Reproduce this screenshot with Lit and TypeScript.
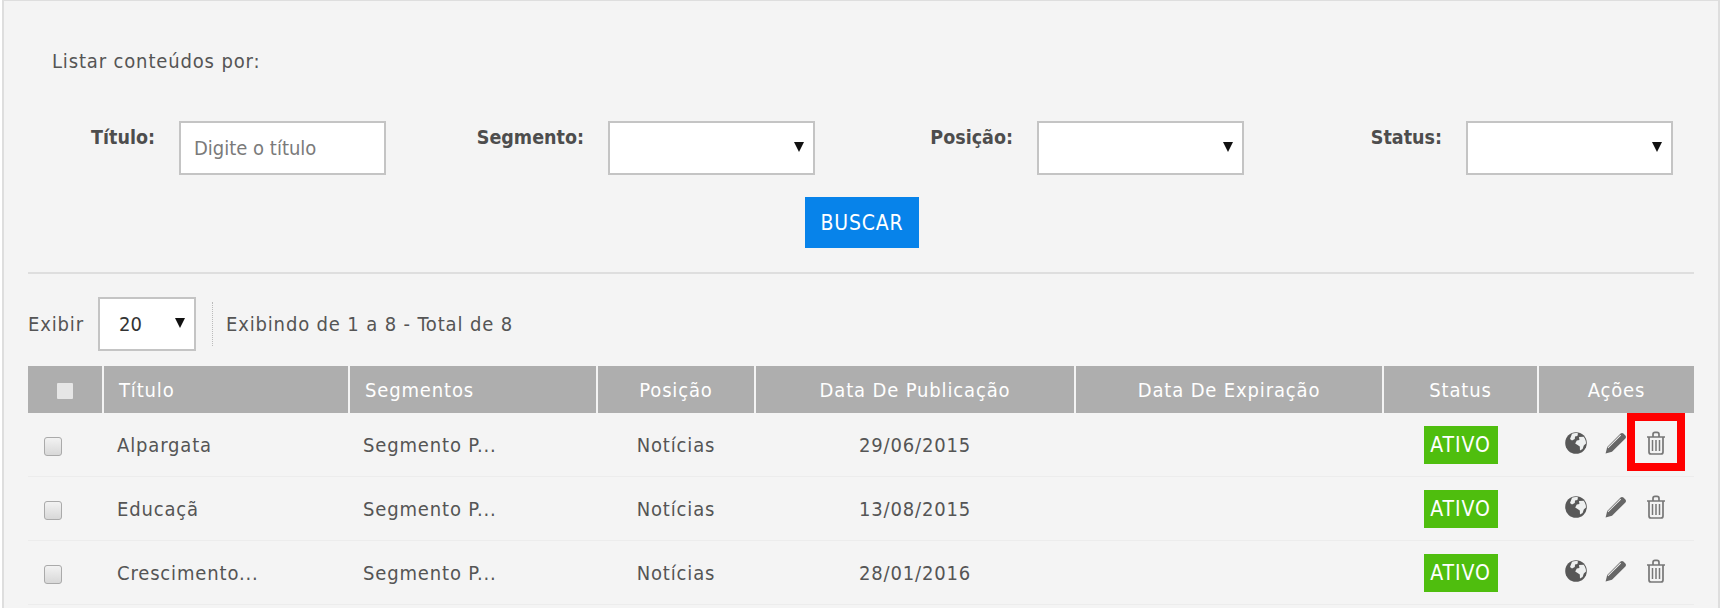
import { LitElement, html, css, svg } from "lit";
import { customElement } from "lit/decorators.js";

const rows = [
  { t: "Alpargata", d: "29/06/2015", mark: true },
  { t: "Educaçã", d: "13/08/2015", mark: false },
  { t: "Crescimento...", d: "28/01/2016", mark: false },
];

const globe = svg`<svg class="ico" viewBox="0 0 22 22"><circle cx="11" cy="11" r="10.8" fill="#585858"/><path fill="#eef0f0" d="M7 1.8 C9 1 11.6 0.9 13 1.4 L12.4 4 L10 4.6 L9.8 7 L7 8.4 L5 7 Z M14 5 L18.6 4.8 C20.2 6.8 21 9 21 11.4 L18.8 13.4 L17.6 17 L15 18.6 L14.8 14.6 L12.2 12.8 L10.2 11.4 L11.8 8.4 L14.4 8 Z"/></svg>`;
const pencil = svg`<svg class="ico" viewBox="0 0 22 22"><path fill="#666" d="M0.6 21.4 L2.2 15 L15.6 1.6 C16.4 0.8 17.6 0.8 18.4 1.6 L20.4 3.6 C21.2 4.4 21.2 5.6 20.4 6.4 L7 19.8 Z"/><path fill="#f4f4f4" d="M2.6 15.6 L15.4 2.8 L16 3.4 L3.2 16.2 Z"/></svg>`;
const trash = svg`<svg class="ico trash" viewBox="0 0 20 24" fill="none" stroke="#777" stroke-width="1.7"><path d="M1 6 H19 M7 5.6 V3.4 Q7 1.4 9 1.4 H11 Q13 1.4 13 3.4 V5.6 M3 6 V21 Q3 23 5 23 H15 Q17 23 17 21 V6"/><path stroke-width="1.5" d="M6.5 9 V20 M10 9 V20 M13.5 9 V20"/></svg>`;

@customElement("app-root")
export class AppRoot extends LitElement {
  static styles = css`
    :host {
      display: block;
      height: 608px;
      overflow: hidden;
      background: #fff;
      font-family: "DejaVu Sans", "Noto Sans", sans-serif;
      font-stretch: condensed;
      font-size: 20px;
      letter-spacing: 0.85px;
      color: #555;
    }
    .panel {
      box-sizing: border-box;
      width: 1718px;
      height: 608px;
      margin-left: 2px;
      padding: 0 24px;
      background: #f4f4f4;
      border: 2px solid #dedede;
      border-width: 1px 2px 0 2px;
    }
    .heading {
      margin: 0;
      padding: 47px 0 0 24px;
      height: 72px;
      box-sizing: border-box;
      font-size: 20px;
      line-height: 26px;
      color: #555;
      font-weight: 400;
    }
    .filters {
      display: grid;
      grid-template-columns: 358px repeat(3, 429px);
    }
    .field {
      display: flex;
      justify-content: flex-end;
      align-items: flex-start;
      margin-top: 48px;
    }
    .field label {
      font-weight: 700;
      font-size: 19.5px;
      letter-spacing: 0;
      line-height: 26px;
      padding-right: 24px;
      padding-top: 4px;
      color: #4d4d4d;
    }
    .box {
      box-sizing: border-box;
      border: 2px solid #c4c4c4;
      background: #fff;
      height: 54px;
      width: 207px;
      display: flex;
      align-items: center;
      position: relative;
    }
    .placeholder {
      padding-left: 13px;
      color: #7a7a7a;
      letter-spacing: 0;
    }
    .caret {
      position: absolute;
      right: 9px;
      top: 19px;
      width: 0;
      height: 0;
      border-left: 5px solid transparent;
      border-right: 5px solid transparent;
      border-top: 10px solid #111;
    }
    .actions-bar {
      display: flex;
      justify-content: center;
      margin-top: 22px;
      padding-left: 2px;
    }
    .btn {
      width: 114px;
      height: 51px;
      background: #0783ea;
      color: #fff;
      border: 0;
      padding: 0;
      font-family: inherit;
      font-stretch: inherit;
      font-size: 21px;
      letter-spacing: 0.8px;
    }
    hr {
      border: 0;
      border-top: 2px solid #dedede;
      margin: 24px 0 0;
    }
    .pager {
      display: flex;
      align-items: center;
      margin-top: 23px;
      height: 54px;
    }
    .pager .box {
      width: 98px;
      margin-left: 14px;
      padding-left: 19px;
      color: #333;
      letter-spacing: 0;
    }
    .sep {
      height: 44px;
      border-left: 1px dotted #bbb;
      margin: 0 13px 0 16px;
    }
    table {
      border-collapse: collapse;
      table-layout: fixed;
      width: 1666px;
      margin-top: 15px;
    }
    th {
      height: 47px;
      padding: 0;
      background: #aeaeae;
      color: #fff;
      font-weight: 400;
      border-left: 2px solid #f4f4f4;
      text-align: center;
    }
    th:first-child {
      border-left: 0;
    }
    th.left {
      text-align: left;
      padding-left: 15px;
    }
    td {
      height: 63px;
      padding: 0;
      border-bottom: 1px solid #ececec;
      text-align: center;
      color: #555;
    }
    td.left {
      text-align: left;
      padding-left: 14px;
    }
    td.pick {
      text-align: left;
      padding-left: 16px;
    }
    .check {
      display: inline-block;
      box-sizing: border-box;
      width: 18px;
      height: 19px;
      border: 1px solid #aaa;
      border-radius: 3px;
      background: linear-gradient(#f2f2f2, #d8d8d8);
      vertical-align: middle;
    }
    .check.head {
      width: 16px;
      height: 16px;
      border: 0;
      border-radius: 1px;
      background: #e6e6e6;
    }
    .badge {
      display: inline-block;
      width: 74px;
      height: 38px;
      line-height: 38px;
      background: #4fbe0e;
      color: #fff;
      font-size: 21px;
      letter-spacing: 0.9px;
      vertical-align: middle;
    }
    .icons {
      display: flex;
      justify-content: center;
      align-items: center;
      gap: 18px;
      position: relative;
      top: -2px;
      left: -1px;
    }
    .ico {
      width: 22px;
      height: 22px;
      display: block;
    }
    .trash {
      width: 20px;
      height: 24px;
    }
    .wrap {
      position: relative;
      display: block;
      margin-left: 1px;
    }
    .mark {
      position: absolute;
      left: -19px;
      top: -18px;
      width: 58px;
      height: 58px;
      box-sizing: border-box;
      border: 8px solid #f00;
    }
  `;

  render() {
    const widths = [75, 246, 248, 158, 320, 308, 155, 156];
    return html`
      <div class="panel">
        <p class="heading">Listar conteúdos por:</p>
        <div class="filters">
          <div class="field"><label>Título:</label><div class="box"><span class="placeholder">Digite o título</span></div></div>
          <div class="field"><label>Segmento:</label><div class="box"><i class="caret"></i></div></div>
          <div class="field"><label>Posição:</label><div class="box"><i class="caret"></i></div></div>
          <div class="field"><label>Status:</label><div class="box"><i class="caret"></i></div></div>
        </div>
        <div class="actions-bar"><button class="btn">BUSCAR</button></div>
        <hr />
        <div class="pager">
          <span>Exibir</span>
          <div class="box">20<i class="caret"></i></div>
          <span class="sep"></span>
          <span>Exibindo de 1 a 8 - Total de 8</span>
        </div>
        <table>
          <colgroup>${widths.map((w) => html`<col style="width:${w}px" />`)}</colgroup>
          <thead>
            <tr>
              <th><span class="check head"></span></th>
              <th class="left">Título</th>
              <th class="left">Segmentos</th>
              <th>Posição</th>
              <th>Data De Publicação</th>
              <th>Data De Expiração</th>
              <th>Status</th>
              <th>Ações</th>
            </tr>
          </thead>
          <tbody>
            ${rows.map(
              (r) => html`<tr>
                <td class="pick"><span class="check"></span></td>
                <td class="left">${r.t}</td>
                <td class="left">Segmento P...</td>
                <td>Notícias</td>
                <td>${r.d}</td>
                <td></td>
                <td><span class="badge">ATIVO</span></td>
                <td>
                  <div class="icons">
                    ${globe}${pencil}
                    <span class="wrap">${trash}${r.mark ? html`<span class="mark"></span>` : ""}</span>
                  </div>
                </td>
              </tr>`
            )}
          </tbody>
        </table>
      </div>
    `;
  }
}
